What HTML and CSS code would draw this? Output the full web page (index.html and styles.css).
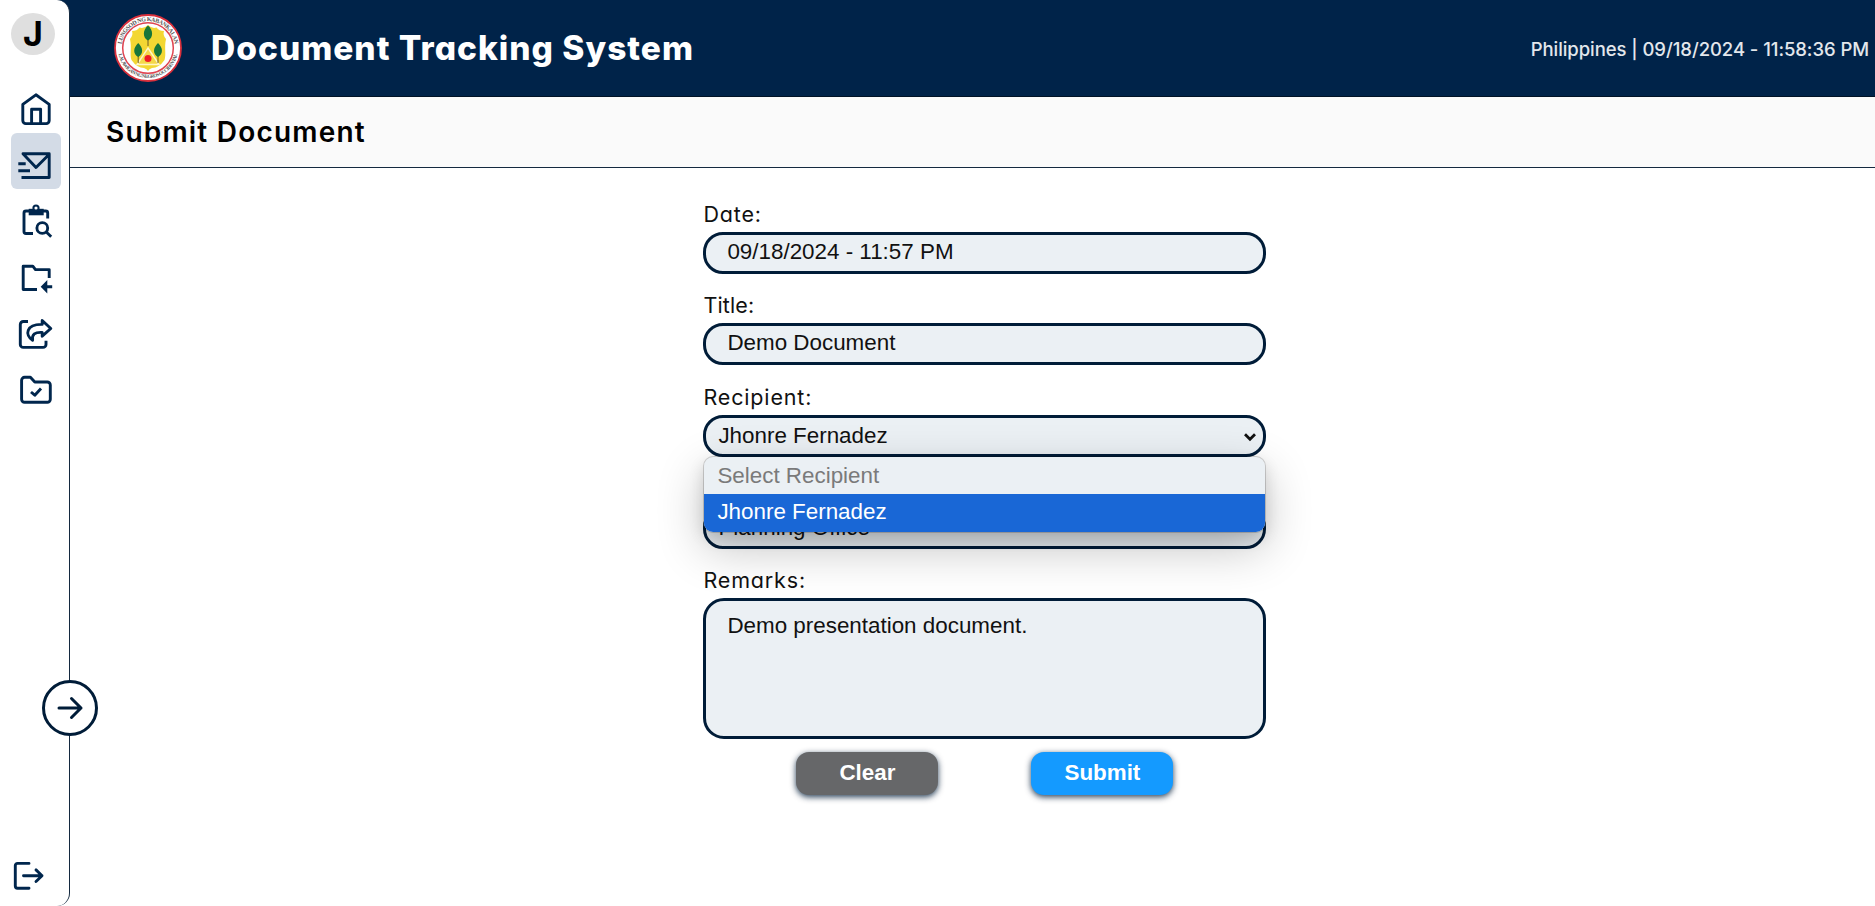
FILE: index.html
```html
<!DOCTYPE html>
<html lang="en">
<head>
<meta charset="utf-8">
<title>Document Tracking System</title>
<link rel="stylesheet" href="styles.css">
</head>
<body>
<div class="app">
  <aside class="sidebar">
    <div class="avatar">J</div>
    <nav class="nav">
      <a class="nav-item"><svg viewBox="0 0 50 56"><path d="M11.8 27.4 L24.9 17.8 L38.2 27.4 V43.6 a3 3 0 0 1 -3 3 H14.8 a3 3 0 0 1 -3 -3 Z"/><path d="M20.6 46.5 V32.3 H29.6 V46.5"/></svg></a>
      <a class="nav-item active"><svg viewBox="0 0 50 56"><path d="M10.5 44.5 H38.2 V20.8 H12 L25 34.5 L38 21.5 M7.3 30.7 H14.7 M7.3 37.7 H19"/></svg></a>
      <a class="nav-item"><svg viewBox="0 0 50 56"><path d="M18 22 H15 a2 2 0 0 0 -2 2 V42.5 a2 2 0 0 0 2 2 H22 M32 22 H34.7 a2 2 0 0 1 2 2 V29.5"/><path class="solid" d="M17.7 19.8 H32.7 V26.3 H17.7 Z"/><circle class="knob" cx="25" cy="19" r="2.6"/><circle cx="31.3" cy="39" r="5.4"/><path d="M35.3 43 L40.2 47.8"/></svg></a>
      <a class="nav-item"><svg viewBox="0 0 50 56"><path d="M26 44.5 H12.2 V21.2 H21.8 L24.5 24.6 H38.2 V33"/><path class="solid" d="M29.7 41.7 L36.3 35 V40.2 H41.2 V43.2 H36.3 V48.5 Z"/></svg></a>
      <a class="nav-item"><svg viewBox="0 0 50 56"><path d="M17 20.5 H12.3 a3 3 0 0 0 -3 3 V43.4 a3 3 0 0 0 3 3 H32 a3 3 0 0 0 3 -3 V39.7"/><path d="M31.2 19.5 L39.8 27.5 L31.2 35.2 V31.4 C24 31 20.6 33 21.6 39.3 C13.5 34 15 23 31.2 23.4 Z"/></svg></a>
      <a class="nav-item"><svg viewBox="0 0 50 56"><path d="M10.6 23.3 a3 3 0 0 1 3 -3 H19.4 L23.8 25 H36.3 a3 3 0 0 1 3 3 V42.3 a3 3 0 0 1 -3 3 H13.6 a3 3 0 0 1 -3 -3 Z"/><path d="M20 35 L23.8 38.2 L30 31.6"/></svg></a>
    </nav>
    <button class="expand"><svg viewBox="0 0 28 28"><path d="M3 14 H25 M15.5 4.5 L25 14 L15.5 23.5"/></svg></button>
    <a class="logout"><svg viewBox="0 0 32 30"><path d="M16 2.4 H4.5 a2.2 2.2 0 0 0 -2.2 2.2 V25 a2.2 2.2 0 0 0 2.2 2.2 H16 M10.5 14.7 H29 M23 8.9 L29 14.7 L23 20.5"/></svg></a>
  </aside>
  <main class="main">
    <header class="header">
      <svg class="seal" viewBox="0 0 68 68">
        <defs><path id="arcTop" d="M7.2 34 a26.8 26.8 0 0 1 53.6 0"/><path id="arcBottom" d="M4 34 a30 30 0 0 0 60 0"/></defs>
        <circle cx="34" cy="34" r="33" fill="#fff" stroke="#d9303c" stroke-width="1.8"/>
        <circle cx="34" cy="34" r="25.3" fill="#fff" stroke="#df4450" stroke-width="1.5"/>
        <text class="seal-text"><textPath href="#arcTop" startOffset="50%" textLength="76">LUNGSOD NG KABANKALAN</textPath></text>
        <text class="seal-text small"><textPath href="#arcBottom" startOffset="50%" textLength="82">LALAWIGAN NG NEGROS OCCIDENTAL</textPath></text>
        <path d="M18 17 Q23 17 25.5 13.5 Q30 15 34 11 Q38 15 42.5 13.5 Q45 17 50 17 Q48.5 21 52 25 C50 34 52.5 40 50.5 46 Q45 54 38 54 Q35 55 34 57 Q33 55 30 54 Q23 54 17.5 46 C15.5 40 18 34 16 25 Q19.5 21 18 17 Z" fill="#f3d733"/>
        <path d="M34 34 L45 50.5 H23 Z" fill="#f4d84a" stroke="#fff6c8" stroke-width="1.4"/>
        <path d="M34 25 V32 M24.2 38 V49 M44 38 V49" stroke="#715d25" stroke-width="1"/>
        <path d="M34 11.5 C39.5 16 39.5 24 34 26.5 C28.5 24 28.5 16 34 11.5 Z M24.2 29 C29.5 34 29.5 40 24.2 43 C18.9 40 18.9 34 24.2 29 Z M44 29 C49.3 34 49.3 40 44 43 C38.7 40 38.7 34 44 29 Z" fill="#17763a"/>
        <circle cx="34" cy="44.5" r="3.5" fill="#ee1c25"/>
      </svg>
      <h1 class="brand">Document Tracking System</h1>
      <div class="clock">Philippines | 09/18/2024 - 11:58:36 PM</div>
    </header>
    <div class="page-bar"><h2 class="page-title">Submit Document</h2></div>
    <form class="form">
      <div class="field"><label class="label">Date:</label><div class="control">09/18/2024 - 11:57 PM</div></div>
      <div class="field"><label class="label narrow">Title:</label><div class="control">Demo Document</div></div>
      <div class="field">
        <label class="label">Recipient:</label>
        <div class="control select">Jhonre Fernadez<svg class="chevron" viewBox="0 0 14 10"><path d="M2 2.2 L7 7.2 L12 2.2"/></svg></div>
        <ul class="options"><li class="option muted">Select Recipient</li><li class="option chosen">Jhonre Fernadez</li></ul>
      </div>
      <div class="field"><div class="label"></div><div class="control select">Planning Office</div></div>
      <div class="field"><label class="label">Remarks:</label><div class="control area">Demo presentation document.</div></div>
      <div class="actions"><button type="button" class="btn clear">Clear</button><button type="button" class="btn submit">Submit</button></div>
    </form>
  </main>
</div>
</body>
</html>
```

FILE: styles.css
```css
* { box-sizing: border-box; }
body { margin: 0; background: #fff; overflow: hidden; font-family: Inter, "Open Sans", sans-serif; font-feature-settings: "cv11"; color: #000; }
svg { display: block; }
.app { display: flex; height: 906px; }

.sidebar {
  position: relative; z-index: 1;
  display: flex; flex-direction: column;
  width: 70px; margin-right: -14px; padding: 13px 0 15px 11px; flex: none;
  background: #fff; border-right: 1.4px solid #14293f;
  border-radius: 0 13px 13px 0;
}
.avatar {
  width: 44px; height: 42px; border-radius: 50%; background: #dfdfdf;
  display: flex; align-items: center; justify-content: center;
  font-size: 34px; font-weight: 700; line-height: 1;
}
.nav { margin-top: 22px; }
.nav-item { display: block; width: 50px; height: 56px; border-radius: 6px; }
.nav-item.active { background: #d3dbe6; }
.nav-item path, .nav-item circle { fill: none; stroke: #00264d; stroke-width: 2.9; stroke-linejoin: round; }
.nav-item .solid { fill: #00264d; stroke: none; }
.nav-item .knob { stroke-width: 2; fill: #fff; }
.expand {
  margin: 267px 0 0 31px; padding: 0; width: 56px; height: 56px; flex: none;
  display: flex; align-items: center; justify-content: center;
  border: 3px solid #001c38; border-radius: 50%; background: #fff;
}
.expand svg { width: 28px; height: 28px; }
.expand path, .logout path { fill: none; stroke: #001c38; stroke-width: 3; stroke-linecap: round; stroke-linejoin: round; }
.logout path { stroke: #00264d; stroke-width: 2.9; }
.logout { margin-top: auto; padding-left: 2px; }
.logout svg { width: 32px; height: 30px; }

.main { flex: 1; min-width: 0; }
.header {
  height: 97px; padding: 0 6px 0 58px; display: flex; align-items: center;
  background: #002349; border-bottom: 1px solid #001226; color: #fff;
}
.seal { width: 68px; height: 68px; }
.seal-text { font: 700 6px "Liberation Serif", serif; fill: #555; text-anchor: middle; }
.seal-text.small { font-size: 5px; }
.brand { margin: 0 0 0 29px; font-size: 33.5px; font-weight: 800; letter-spacing: 1px; white-space: nowrap; line-height: 40px; }
.clock { margin: 2px 0 0 auto; font-size: 18.5px; font-weight: 500; letter-spacing: -.07px; color: #e3e7ec; white-space: nowrap; }
.page-bar {
  height: 71px; padding: 0 0 0 50px; display: flex; align-items: center;
  background: #fafafa; border-bottom: 1.5px solid #14293f;
}
.page-title { margin: 0; font-size: 28px; font-weight: 600; letter-spacing: 1.2px; white-space: nowrap; }

.form { width: 563px; margin: 31.5px 0 0 647.4px; }
.field { position: relative; margin-bottom: 17.7px; }
.label { display: block; height: 32px; line-height: 29px; font-size: 21.5px; letter-spacing: .85px; color: #111; white-space: nowrap; }
.narrow { letter-spacing: .15px; }
.control {
  height: 42px; padding: 0 21px; line-height: 34px;
  border: 3px solid #001c38; border-radius: 20px; background: #ebf0f4;
  font: 22.4px/34px "Liberation Sans", Arial, sans-serif; color: #111; white-space: nowrap;
}
.select { display: flex; justify-content: space-between; padding: 0 6px 0 12px; line-height: 36px; }
.chevron { width: 14px; height: 10px; margin-top: 14px; }
.chevron path { fill: none; stroke: #111; stroke-width: 2.8; }
.area { height: 141px; padding-top: 8px; border-radius: 21px; }
.options {
  position: absolute; z-index: 2; left: 1px; right: 1px; top: 74px; height: 75px;
  margin: 0; padding: 0; list-style: none;
  border-radius: 9px; background: #ebf0f4;
  box-shadow: 0 0 0 1px rgba(0,0,0,.16), 0 16px 48px rgba(0,0,0,.24), 0 6px 16px rgba(0,0,0,.14);
}
.option { height: 37.5px; padding-left: 13px; font: 22.4px/37px "Liberation Sans", Arial, sans-serif; }
.muted { color: #7a7a7a; }
.chosen { line-height: 35px; background: #1967d6; color: #fff; border-radius: 0 0 9px 9px; }

.actions { display: flex; gap: 93px; margin-top: 13.2px; padding-left: 93px; }
.field:nth-last-child(2) { margin-bottom: 0; }
.btn {
  width: 142px; height: 43px; padding: 0 0 2px; border: 0; border-radius: 13px;
  font: 700 22.4px "Liberation Sans", Arial, sans-serif; color: #fff;
  box-shadow: 0 2px 6px rgba(0,28,56,.85);
}
.clear { background: #666769; }
.submit { background: #149aff; }
```
